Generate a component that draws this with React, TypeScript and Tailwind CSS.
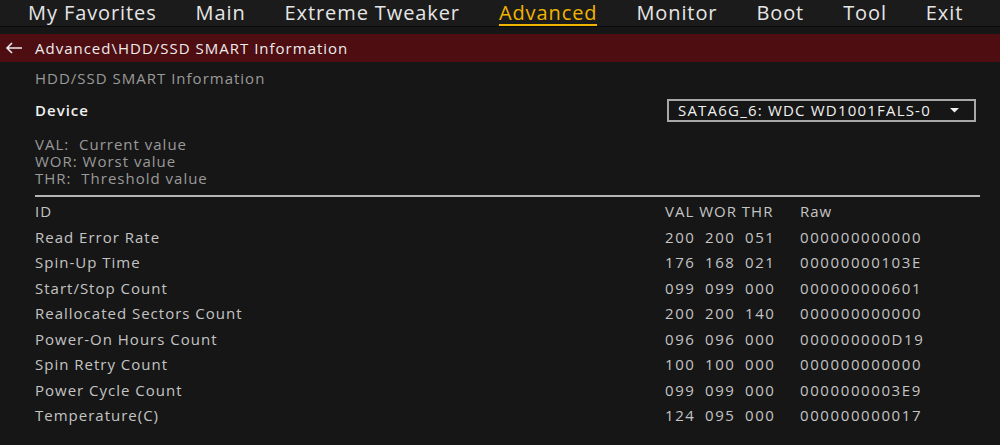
import React from 'react';

const tabs = ['My Favorites', 'Main', 'Extreme Tweaker', 'Advanced', 'Monitor', 'Boot', 'Tool', 'Exit'];

const rows = [
  ['Read Error Rate', '200', '200', '051', '000000000000'],
  ['Spin-Up Time', '176', '168', '021', '00000000103E'],
  ['Start/Stop Count', '099', '099', '000', '000000000601'],
  ['Reallocated Sectors Count', '200', '200', '140', '000000000000'],
  ['Power-On Hours Count', '096', '096', '000', '000000000D19'],
  ['Spin Retry Count', '100', '100', '000', '000000000000'],
  ['Power Cycle Count', '099', '099', '000', '0000000003E9'],
  ['Temperature(C)', '124', '095', '000', '000000000017'],
];

export default function App() {
  return (
    <div
      className="w-[1000px] h-[445px] overflow-hidden bg-[#161616] text-[#c4c4c4]"
      style={{ fontFamily: '"Open Sans", "Noto Sans", sans-serif' }}
    >
      {/* top menu */}
      <nav className="h-[27px] bg-[#1b1b1b] border-b border-[#0a0a0a] flex items-center gap-[39px] pl-[28px] text-[20px] leading-none tracking-[0.9px]">
        {tabs.map((t) =>
          t === 'Advanced' ? (
            <span key={t} className="text-[#f0b400] border-b-2 border-[#f0b400] pb-[1px] mt-[2px]">
              {t}
            </span>
          ) : (
            <span key={t} className="text-[#e6e6e6]">
              {t}
            </span>
          )
        )}
      </nav>

      {/* breadcrumb */}
      <div className="mt-[7px] h-[28px] bg-[#4e0d10] flex items-center text-[15px] tracking-[1px] text-[#ececec]">
        <svg width="18" height="12" viewBox="0 0 18 12" className="ml-[5px] mr-[12px]" fill="none" stroke="#ececec" strokeWidth="1.6">
          <path d="M17 6H2M7 1L2 6l5 5" />
        </svg>
        <span>Advanced\HDD/SSD SMART Information</span>
      </div>

      <div className="pl-[35px] pr-[20px] text-[15px] tracking-[1px]">
        <div className="mt-[6px] text-[#9a9a9a] leading-[20px]">HDD/SSD SMART Information</div>

        <div className="mt-[11px] flex items-center justify-between">
          <span className="font-semibold text-[#f0f0f0]">Device</span>
          <div className="w-[309px] h-[23px] border-2 border-[#a8a8a8] flex items-center justify-between pl-[9px] pr-[15px] text-[#f0f0f0] mr-[4px] tracking-[1.2px]">
            <span>SATA6G_6: WDC WD1001FALS-0</span>
            <svg width="9" height="5" viewBox="0 0 9 5">
              <path d="M0 0h9L4.5 4.5z" fill="#f0f0f0" />
            </svg>
          </div>
        </div>

        <div className="mt-[14px] text-[#9a9a9a] leading-[17px]">
          <div>VAL:&nbsp; Current value</div>
          <div>WOR: Worst value</div>
          <div>THR:&nbsp; Threshold value</div>
        </div>

        <div className="mt-[8px] h-[2px] bg-[#b5b5b5] w-[945px]" />

        <div className="mt-[2px]">
          <div className="grid grid-cols-[630px_40px_40px_55px_1fr] h-[25px] items-center">
            <span>ID</span>
            <span className="col-span-3">VAL WOR THR</span>
            <span>Raw</span>
          </div>
          {rows.map((r) => (
            <div key={r[0]} className="grid grid-cols-[630px_40px_40px_55px_1fr] h-[25.5px] items-center">
              {r.map((c, i) => (
                <span key={i} className={i === 0 ? '' : 'tracking-[1.6px]'}>
                  {c}
                </span>
              ))}
            </div>
          ))}
        </div>
      </div>
    </div>
  );
}
